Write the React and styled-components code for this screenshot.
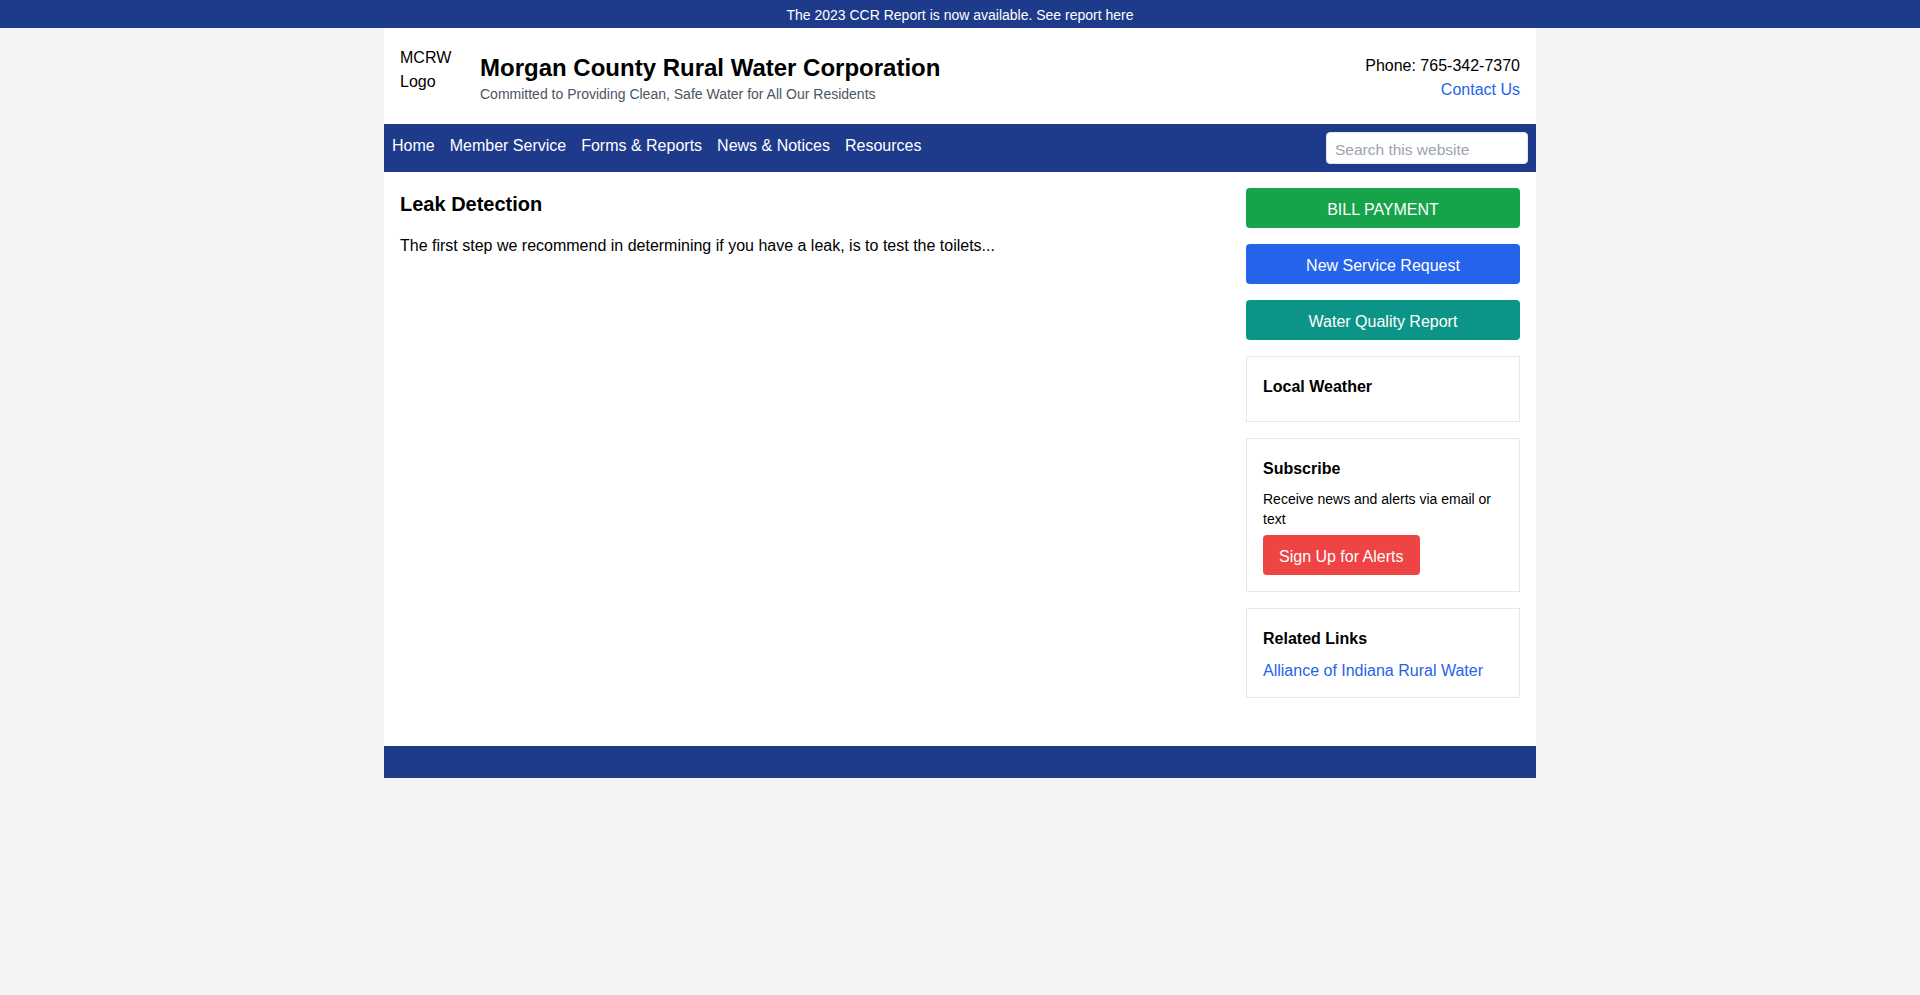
import React from "react";
import styled, { createGlobalStyle } from "styled-components";

const GlobalStyle = createGlobalStyle`
  html, body {
    margin: 0;
    padding: 0;
    background: #f3f4f6;
    font-family: "Liberation Sans", Arial, sans-serif;
    color: #000;
  }
  * { box-sizing: border-box; }
`;

const Banner = styled.div`
  background: #1e3a8a;
  color: #fff;
  font-size: 14px;
  line-height: 20px;
  padding: 5px 0 3px;
  text-align: center;
`;

const Container = styled.div`
  max-width: 1152px;
  margin: 0 auto;
  background: #fff;
`;

const Header = styled.header`
  display: flex;
  align-items: center;
  justify-content: space-between;
  padding: 18px 16px 14px;
`;

const Brand = styled.div`
  display: flex;
  align-items: center;
`;

const Logo = styled.div`
  width: 64px;
  height: 64px;
  margin-right: 16px;
  font-size: 16px;
  line-height: 24px;
`;

const TitleBlock = styled.div`
  display: flex;
  flex-direction: column;
`;

const Title = styled.h1`
  margin: 0;
  font-size: 24px;
  line-height: 32px;
  font-weight: 700;
`;

const Tagline = styled.p`
  margin: 0;
  font-size: 14px;
  line-height: 20px;
  color: #4b5563;
`;

const Contact = styled.div`
  text-align: right;
  font-size: 16px;
  line-height: 24px;
`;

const Link = styled.a`
  color: #2563eb;
  text-decoration: none;
  font-size: 16px;
  line-height: 24px;
`;

const RelatedLink = styled(Link)`
  display: block;
  height: 24px;
  padding-top: 2px;
`;

const Nav = styled.nav`
  background: #1e3a8a;
  display: flex;
  justify-content: space-between;
  padding: 8px;
  height: 48px;
`;

const NavLinks = styled.div`
  display: flex;
  gap: 15px;
  padding-top: 2px;
`;

const NavLink = styled.a`
  color: #fff;
  text-decoration: none;
  font-size: 16px;
  line-height: 24px;
`;

const Search = styled.input`
  width: 202px;
  height: 32px;
  border: 1px solid #e5e7eb;
  border-radius: 4px;
  padding: 3px 8px 0;
  font-family: inherit;
  font-size: 15.5px;
  outline: none;
  &::placeholder { color: #9ca3af; }
`;

const Body = styled.div`
  display: flex;
  gap: 24px;
  padding: 16px;
`;

const Main = styled.main`
  flex: 1;
`;

const Heading = styled.h2`
  margin: 0 0 14px;
  padding-top: 2px;
  font-size: 20px;
  line-height: 28px;
  font-weight: 700;
`;

const Para = styled.p`
  margin: 0;
  padding-top: 2px;
  font-size: 16px;
  line-height: 24px;
`;

const Sidebar = styled.aside`
  width: 274px;
  display: flex;
  flex-direction: column;
  gap: 16px;
`;

const ActionButton = styled.a`
  display: block;
  background: ${(p) => p.$bg};
  color: #fff;
  text-align: center;
  font-size: 16px;
  line-height: 24px;
  padding: 10px 16px 6px;
  border-radius: 4px;
  text-decoration: none;
`;

const Widget = styled.section`
  border: 1px solid #e5e7eb;
  padding: 16px;
`;

const WidgetTitle = styled.h3`
  margin: 0 0 6px;
  padding-top: 2px;
  font-size: 16px;
  line-height: 24px;
  font-weight: 700;
`;

const WidgetText = styled.p`
  margin: 0 0 6px;
  padding-top: 2px;
  font-size: 14px;
  line-height: 20px;
`;

const AlertButton = styled.a`
  display: inline-block;
  background: #ef4444;
  color: #fff;
  font-size: 16px;
  line-height: 24px;
  padding: 10px 16px 6px;
  border-radius: 4px;
  text-decoration: none;
`;

const Footer = styled.footer`
  background: #1e3a8a;
  margin-top: 32px;
  padding: 16px;
`;

const navItems = ["Home", "Member Service", "Forms & Reports", "News & Notices", "Resources"];

export default function App() {
  return (
    <>
      <GlobalStyle />
      <Banner>The 2023 CCR Report is now available. See report here</Banner>
      <Container>
        <Header>
          <Brand>
            <Logo>MCRW Logo</Logo>
            <TitleBlock>
              <Title>Morgan County Rural Water Corporation</Title>
              <Tagline>Committed to Providing Clean, Safe Water for All Our Residents</Tagline>
            </TitleBlock>
          </Brand>
          <Contact>
            <div>Phone: 765-342-7370</div>
            <Link href="#">Contact Us</Link>
          </Contact>
        </Header>
        <Nav>
          <NavLinks>
            {navItems.map((n) => (
              <NavLink key={n} href="#">{n}</NavLink>
            ))}
          </NavLinks>
          <Search placeholder="Search this website" />
        </Nav>
        <Body>
          <Main>
            <Heading>Leak Detection</Heading>
            <Para>The first step we recommend in determining if you have a leak, is to test the toilets...</Para>
          </Main>
          <Sidebar>
            <ActionButton href="#" $bg="#16a34a">BILL PAYMENT</ActionButton>
            <ActionButton href="#" $bg="#2563eb">New Service Request</ActionButton>
            <ActionButton href="#" $bg="#0d9488">Water Quality Report</ActionButton>
            <Widget>
              <WidgetTitle>Local Weather</WidgetTitle>
            </Widget>
            <Widget>
              <WidgetTitle>Subscribe</WidgetTitle>
              <WidgetText>Receive news and alerts via email or text</WidgetText>
              <AlertButton href="#">Sign Up for Alerts</AlertButton>
            </Widget>
            <Widget>
              <WidgetTitle>Related Links</WidgetTitle>
              <RelatedLink href="#">Alliance of Indiana Rural Water</RelatedLink>
            </Widget>
          </Sidebar>
        </Body>
        <Footer />
      </Container>
    </>
  );
}
